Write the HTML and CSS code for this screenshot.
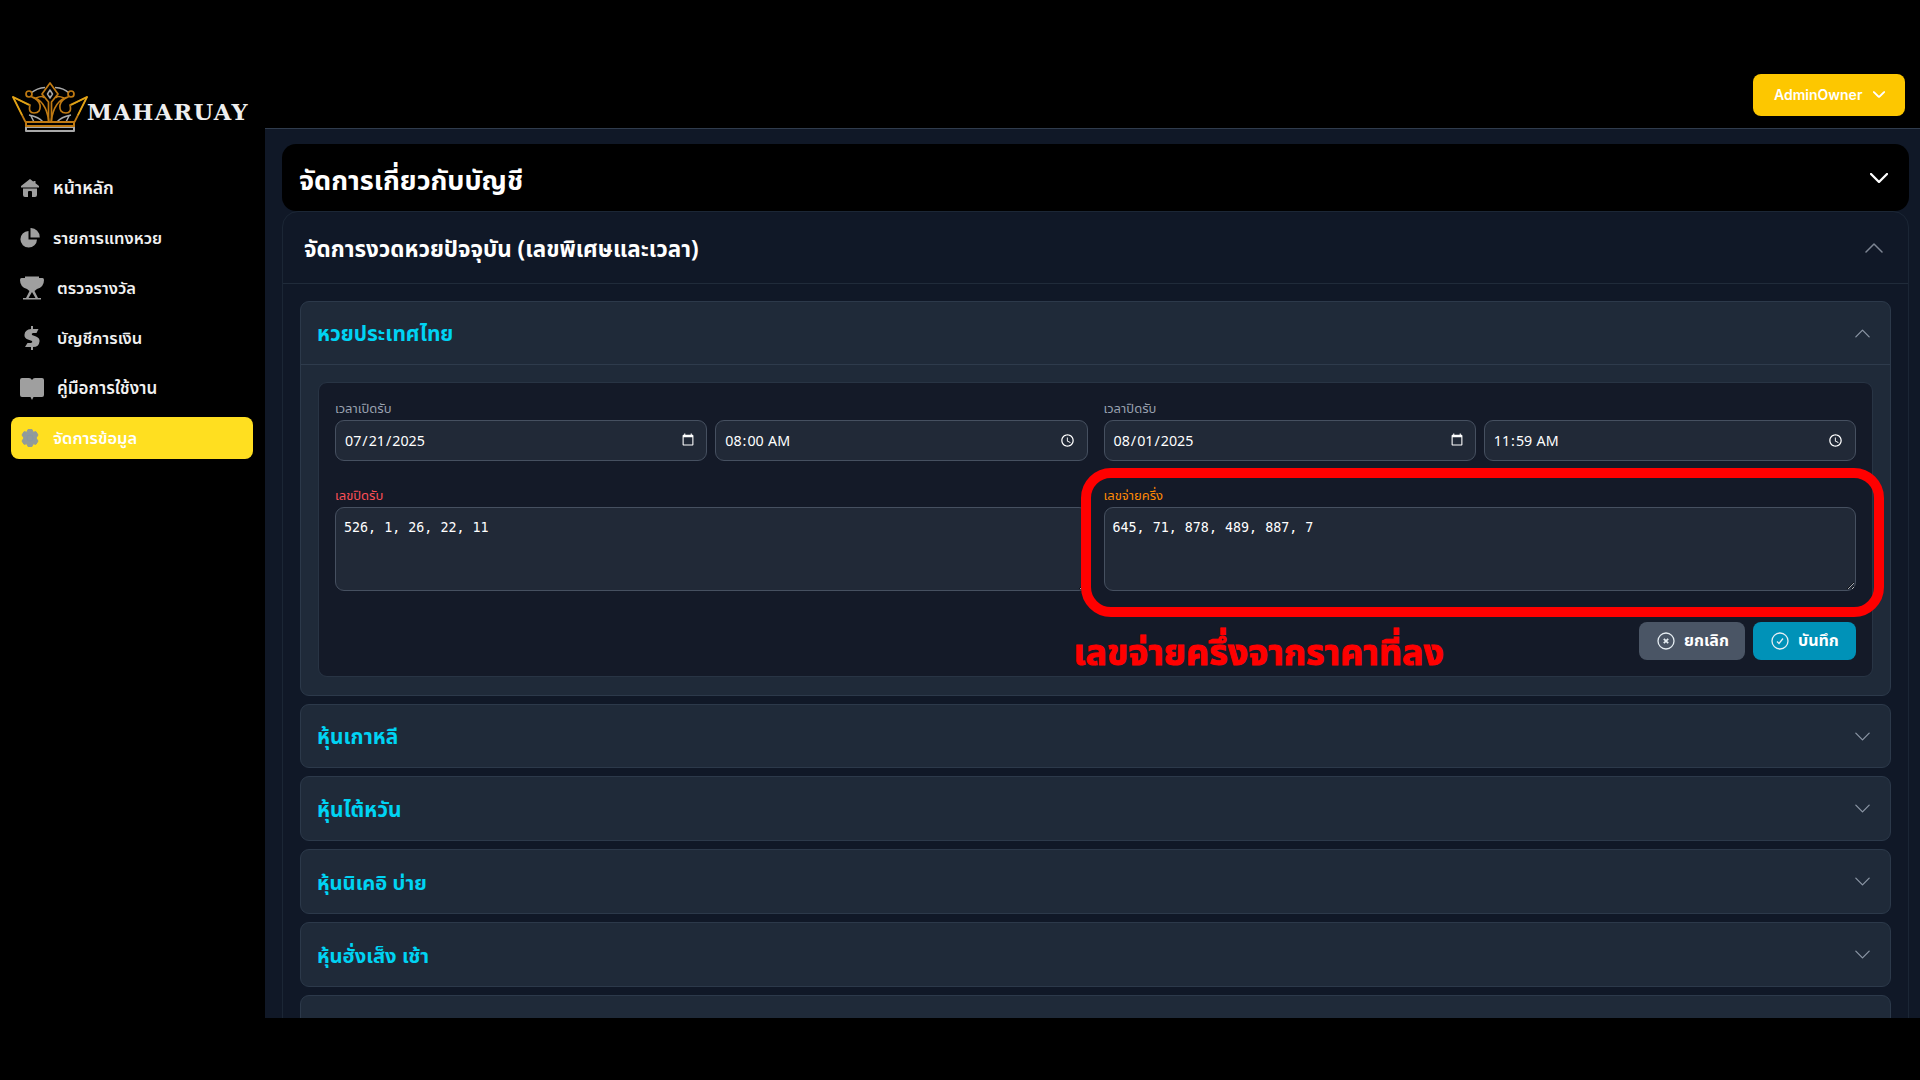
FILE: index.html
```html
<!DOCTYPE html>
<html lang="th">
<head>
<meta charset="utf-8">
<title>MAHARUAY</title>
<link rel="stylesheet" href="styles.css">
</head>
<body>
<svg class="defs" width="0" height="0" aria-hidden="true">
  <symbol id="down" viewBox="0 0 18 10"><path d="M1 1l8 8 8-8" fill="none" stroke="currentColor" stroke-linecap="round" stroke-linejoin="round"/></symbol>
  <symbol id="up" viewBox="0 0 18 10"><path d="M1 9l8-8 8 8" fill="none" stroke="currentColor" stroke-linecap="round" stroke-linejoin="round"/></symbol>
</svg>
<div class="app">
  <aside class="sidebar">
    <div class="brand">
      <svg class="crown" viewBox="0 0 76 50" fill="none" stroke-linejoin="round">
        <g stroke="#a9a9a9" stroke-width="1.5">
          <path d="M19 11Q25 6 33 5.500M43 5.500Q52 6 57 11M17 33q10 2 14 7M59 33q-10 2-14 7M19 34l3 6M57 34l-3 6"/>
          <path d="M38 8l-2.500 4 2.500 4 2.500-4z"/>
          <path d="M14 45v4h48v-4z" stroke-width="2"/>
        </g>
        <g stroke="#c07a12" stroke-width="1.700">
          <path d="M13.500 40L1 15l17 8q-2 8 4 8 7 0 6-8-1-5-8-8 14 3 17 25M62.500 40L75 15l-17 8q2 8-4 8-7 0-6-8 1-5 8-8-14 3-17 25"/>
          <path d="M36.500 40V20L30 12l8-11 8 11-6.500 8v20M24 16q7-3 8 0M52 16q-7-3-8 0"/>
          <circle cx="17" cy="12" r="3"/><circle cx="59" cy="12" r="3"/>
          <path d="M14 40h48v4H14z" stroke-width="2"/>
        </g>
        <path d="M10 33L1 15l16 8M66 33l9-18-16 8" stroke="#e0a516" stroke-width="1.600"/>
      </svg>
      <span class="brand-name">MAHARUAY</span>
    </div>
    <nav class="menu">
      <a class="item"><svg class="ico" viewBox="0 0 20 20"><path d="M10 1L1 8v1.500h18V8L15.500 5.300V3h-2v.8zM3 10.500V17q0 2 2 2h3v-5q0-1 1-1h2q1 0 1 1v5h3q2 0 2-2v-6.500z"/></svg><span class="t1">หน้าหลัก</span></a>
      <a class="item"><svg class="ico" viewBox="0 0 20 20"><path d="M8.500 3v8.500H17A8.300 8.300 0 1 1 8.500 3z"/><path d="M10.500 0a9 9 0 0 1 9.200 9.500h-9.200z"/></svg><span class="t2">รายการแทงหวย</span></a>
      <a class="item wide"><svg class="ico" viewBox="0 0 24 24"><path d="M5 .5h14V2h3.500Q24 2 24 4q0 7-7 9l-2.500 2 3.500 7h3v1.500H3V22h3l3.500-7L7 13Q0 11 0 4q0-2 1.500-2H5zM12 16l-3.500 6h7z"/></svg><span class="t3">ตรวจรางวัล</span></a>
      <a class="item wide"><svg class="ico" viewBox="0 0 24 24"><path d="M11 0h2v3h5.500l-2 4H13q-2 .5-1 2l4 1.500q4 1.500 3.500 5-.5 5.500-6.500 5.500v3h-2v-3H5l2.500-4H11q2-.5 1-2l-4-1.500Q4 12 4.500 8.500 5 3.500 11 3z"/></svg><span class="t4">บัญชีการเงิน</span></a>
      <a class="item wide"><svg class="ico" viewBox="0 0 24 24"><path d="M2 2h7q2 0 3 2 1-2 3-2h7q2 0 2 2v15q0 2-2 2h-8.500L12 24l-1.500-3H2q-2 0-2-2V4q0-2 2-2z"/></svg><span class="t5">คู่มือการใช้งาน</span></a>
      <a class="item active"><svg class="ico" viewBox="0 0 20 20"><path d="M8 1.500h4l1 2.700 3-.5 2 3.300-2 3 2 3-2 3.300-3-.5-1 2.700H8l-1-2.700-3 .5L2 13l2-3-2-3 2-3.300 3 .5z" stroke="#919b9b" stroke-linejoin="round"/><circle cx="10" cy="10" r="3" fill="none" stroke="#8796a8" stroke-width=".8"/></svg><span class="t6">จัดการข้อมูล</span></a>
    </nav>
  </aside>
  <div class="main">
    <header class="topbar">
      <button class="user"><span>AdminOwner</span><svg viewBox="0 0 18 10" class="chev-user"><use href="#down"/></svg></button>
    </header>
    <main class="content">
      <section class="account">
        <h1>จัดการเกี่ยวกับบัญชี</h1>
        <svg class="chev strong"><use href="#down"/></svg>
      </section>
      <section class="panel">
        <div class="panel-head"><h2>จัดการงวดหวยปัจจุบัน (เลขพิเศษและเวลา)</h2><svg class="chev"><use href="#up"/></svg></div>
        <div class="list">
          <article class="card open">
            <div class="card-head"><h3 class="c0">หวยประเทศไทย</h3><svg class="chev small"><use href="#up"/></svg></div>
            <div class="card-body">
              <form class="form">
                <div class="grid">
                  <div class="field"><label>เวลาเปิดรับ</label>
                    <div class="pair"><input type="date" value="2025-07-21"><input type="time" value="08:00"></div></div>
                  <div class="field"><label>เวลาปิดรับ</label>
                    <div class="pair"><input type="date" value="2025-08-01"><input type="time" value="11:59"></div></div>
                  <div class="field"><label class="red">เลขปิดรับ</label><textarea>526, 1, 26, 22, 11</textarea></div>
                  <div class="field marked"><label class="orange">เลขจ่ายครึ่ง</label><textarea>645, 71, 878, 489, 887, 7</textarea>
                    <div class="marker"></div><div class="note">เลขจ่ายครึ่งจากราคาที่ลง</div></div>
                </div>
                <div class="actions">
                  <button type="button" class="btn cancel"><svg viewBox="0 0 18 18"><circle cx="9" cy="9" r="8"/><path d="M6.800 6.800l4.400 4.400M11.200 6.800l-4.400 4.400" stroke-width="1.700"/></svg><span>ยกเลิก</span></button>
                  <button type="button" class="btn save"><svg viewBox="0 0 18 18"><circle cx="9" cy="9" r="8"/><path d="M6 9.500l2 2 4-5"/></svg><span>บันทึก</span></button>
                </div>
              </form>
            </div>
          </article>
          <article class="card"><div class="card-head"><h3 class="c1">หุ้นเกาหลี</h3><svg class="chev small"><use href="#down"/></svg></div></article>
          <article class="card"><div class="card-head"><h3 class="c2">หุ้นไต้หวัน</h3><svg class="chev small"><use href="#down"/></svg></div></article>
          <article class="card"><div class="card-head"><h3 class="c3">หุ้นนิเคอิ บ่าย</h3><svg class="chev small"><use href="#down"/></svg></div></article>
          <article class="card"><div class="card-head"><h3 class="c4">หุ้นฮั่งเส็ง เช้า</h3><svg class="chev small"><use href="#down"/></svg></div></article>
          <article class="card"><div class="card-head"></div></article>
        </div>
      </section>
    </main>
  </div>
</div>
</body>
</html>
```
FILE: styles.css
```css
* { box-sizing: border-box; }
body { margin: 0; height: 1080px; overflow: hidden; background: #000; color: #fff; font-family: "Noto Sans", "Noto Sans Thai", "Open Sans", sans-serif; }
h1, h2, h3 { margin: 0; font-weight: 700; white-space: nowrap; line-height: 1.4; }
button, input, textarea { font: inherit; color: inherit; margin: 0; }
.defs { position: absolute; }
.app { display: flex; height: 1018px; overflow: hidden; }
.sidebar { width: 265px; padding: 82px 12px 0 11px; background: #000; flex: none; }
.brand { display: flex; height: 50px; margin-bottom: 35px; }
.crown { width: 76px; height: 50px; margin-left: 1px; flex: none; }
.brand-name { font: 700 22.500px/30px "DejaVu Serif", serif; letter-spacing: 1.350px; margin: 15px 0 0 -1px; white-space: nowrap; color: #eee; }
.menu { display: flex; flex-direction: column; gap: 8px; }
.item { display: flex; align-items: center; height: 42px; padding-left: 9px; gap: 13px; border-radius: 8px; font-size: 16.500px; font-weight: 600; white-space: nowrap; color: #f1f1f1; }
.item span { padding-top: 1px; }
.t1 { font-size: 17.500px; }
.t5 { font-size: 17px; }
.item.active { background: #ffdf20; color: #fff; }
.ico { width: 20px; height: 20px; fill: #9f9f9f; flex: none; }
.wide .ico { width: 24px; height: 24px; }
.active .ico { fill: #919b9b; }
.main { flex: 1; display: flex; flex-direction: column; min-width: 0; background: #101827; }
.topbar { height: 129px; flex: none; background: #000; border-bottom: 1px solid #303c4d; display: flex; justify-content: flex-end; padding: 73.500px 15px 0 0; }
.user { display: flex; align-items: center; justify-content: space-between; width: 152px; height: 42px; padding: 0 20px 0 21px; border: 0; border-radius: 8px; background: #fdc700; font: 600 14px Inter, sans-serif; }
.chev-user { width: 12px; height: 7px; stroke-width: 3; }
.content { padding: 15px 11px 0 17px; }
.account { display: flex; align-items: center; justify-content: space-between; height: 67px; padding: 0 21px 0 17px; border-radius: 14px; background: #000; }
.account h1 { font-size: 27px; padding-top: 4px; }
.chev { width: 18px; height: 10px; color: #7d8593; stroke-width: 1.500; }
.chev.strong { color: #fff; stroke-width: 2.300; }
.chev.small { width: 15px; height: 9px; color: #8b96a5; }
.panel { border: 1px solid #1b2635; border-radius: 16px; }
.panel-head { display: flex; align-items: center; justify-content: space-between; height: 72px; padding: 0 25px 0 21px; border-bottom: 1px solid #202b3a; }
.panel-head h2 { font-size: 22.400px; padding-top: 2px; }
.list { display: flex; flex-direction: column; gap: 8px; padding: 17px; }
.card { border: 1px solid #2c394a; border-radius: 9px; background: #1f2a39; height: 64.800px; flex: none; }
.card.open { height: 394.500px; }
.card-head { display: flex; align-items: center; justify-content: space-between; height: 63px; padding: 0 20px 0 16px; }
.open .card-head { border-bottom: 1px solid #2e3b4c; }
.card h3 { font-size: 20.900px; color: #00d3f3; padding-top: 1px; }
.card h3.c3, .card h3.c4 { font-size: 20.200px; }
.card-body { padding: 17px; }
.form { height: 295px; padding: 16px; border: 1px solid #283444; border-radius: 9px; background: #141a28; }
.grid { display: grid; grid-template-columns: 1fr 1fr; column-gap: 16px; row-gap: 25px; }
.field { display: flex; flex-direction: column; min-width: 0; }
.field label { font-size: 13px; line-height: 18px; height: 21px; white-space: nowrap; color: #99a1af; }
.field label.red { color: #fb4f56; }
.field label.orange { color: #ff8904; }
.pair { display: grid; grid-template-columns: 1fr 1fr; gap: 8px; }
input, textarea { border: 1px solid #465060; border-radius: 9px; background: #212937; color-scheme: dark; }
input { height: 41px; padding: 0 9px 0 8px; font-size: 14.250px; width: 100%; }
textarea { display: block; width: 100%; height: 84px; padding: 8px; font: 13.350px/24px "DejaVu Sans Mono", monospace; resize: vertical; }
.marked { position: relative; }
.marker { position: absolute; left: -23px; top: -18px; width: 803px; height: 149px; border: 10px solid #f00; border-radius: 30px; }
.note { position: absolute; left: -30px; top: 140px; white-space: nowrap; color: #f00; font-size: 35.800px; font-weight: 700; line-height: 50px; -webkit-text-stroke: 1px #f00; }
.actions { display: flex; justify-content: flex-end; gap: 8px; margin-top: 31px; }
.btn { display: flex; align-items: center; gap: 9px; height: 38px; padding: 0 0 0 18px; border: 0; border-radius: 8px; font-size: 16px; font-weight: 700; white-space: nowrap; }
.btn svg { width: 18px; height: 18px; fill: none; stroke: #e6eef3; stroke-width: 1.300; flex: none; }
.cancel { width: 106px; background: #4a5565; }
.save { width: 103px; background: #0092b8; }
```
